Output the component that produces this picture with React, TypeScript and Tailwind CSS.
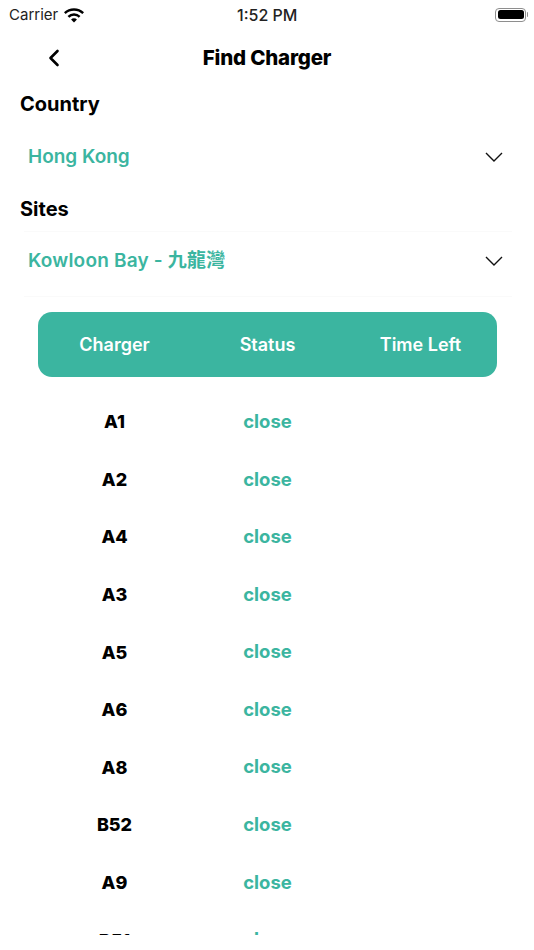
import { ChevronLeft } from "lucide-react";

const chargers = ["A1", "A2", "A4", "A3", "A5", "A6", "A8", "B52", "A9", "B51"];

function WifiIcon() {
  return (
    <svg width="20" height="15" viewBox="1.5 1 17 12.500" fill="#000">
      <path d="M10 3.2c2.7 0 5.2 1 7.1 2.8l1.4-1.5A12.4 12.4 0 0 0 10 1 12.4 12.4 0 0 0 1.500 4.500L2.900 6A10.300 10.300 0 0 1 10 3.200Z" />
      <path d="M10 7.500c1.500 0 2.900.6 4 1.600l1.500-1.500A8 8 0 0 0 10 5.300a8 8 0 0 0-5.500 2.300L6 9.100a5.800 5.800 0 0 1 4-1.600Z" />
      <path d="M10 9.600c-1 0-1.800.4-2.500 1L10 13.200l2.500-2.600c-.7-.6-1.500-1-2.500-1Z" />
    </svg>
  );
}

function BatteryIcon() {
  return (
    <div className="flex items-center">
      <div className="flex h-[14px] w-[31px] items-center rounded-[4px] border border-[#8e8e8e] p-[1.500px]">
        <div className="h-full w-full rounded-[2.500px] bg-black" />
      </div>
      <div className="ml-px h-[5px] w-[1px] rounded-r bg-[#8e8e8e]" />
    </div>
  );
}

function Chevron() {
  return (
    <svg width="18" height="10" viewBox="0 0 18 10" fill="none" stroke="#111" strokeWidth="1.400">
      <path d="M1 1l8 8 8-8" />
    </svg>
  );
}

export default function App() {
  return (
    <div
      className="h-[950px] w-[534px] overflow-hidden bg-white text-black"
      style={{ fontFamily: 'Inter, "Noto Sans CJK TC", sans-serif' }}
    >
      <div className="relative flex h-[28px] items-center justify-between pl-[9px] pr-[6px] pt-[1px]">
        <div className="flex items-center gap-[6px] pt-[1px] text-[15px] text-[#222]">
          Carrier <WifiIcon />
        </div>
        <span className="absolute left-[237px] text-[16px] font-medium text-[#222]">1:52 PM</span>
        <BatteryIcon />
      </div>

      <div className="relative flex h-[60px] items-center justify-center">
        <ChevronLeft size={28} strokeWidth={2.250} className="absolute left-[40px]" />
        <h1 className="text-[20.500px] font-extrabold tracking-[-0.2px]">Find Charger</h1>
      </div>

      <div className="px-[20px]">
        <div className="flex h-[32px] items-center text-[20px] font-bold">Country</div>
        <div className="flex h-[72px] items-center justify-between pl-[8px] pr-[11px] pt-[1px]">
          <span className="pt-[1px] text-[19px] font-semibold text-[#3bb5a0]">Hong Kong</span>
          <Chevron />
        </div>
        <div className="flex h-[39px] items-center pb-[6px] text-[20px] font-bold">Sites</div>
        <div className="ml-[4px] mr-[2px] flex h-[66px] items-center justify-between border-y border-[#fafafa] pb-[7px] pl-[4px] pr-[9px]">
          <span className="pt-[1px] text-[19px] font-semibold tracking-[0.2px] text-[#3bb5a0]">Kowloon Bay - 九龍灣</span>
          <Chevron />
        </div>
      </div>

      <div className="ml-[38px] mr-[37px] mt-[15px] grid h-[65px] grid-cols-3 items-center rounded-[14px] bg-[#3bb5a0] text-center text-[18px] font-semibold text-white">
        <span>Charger</span>
        <span>Status</span>
        <span>Time Left</span>
      </div>

      <div className="ml-[38px] mr-[37px] mt-[16px] h-[542px] overflow-hidden">
        {chargers.map((name, i) => (
          <div key={i} className="grid h-[57.600px] grid-cols-3 items-center text-center text-[18px]">
            <span className="font-extrabold">{name}</span>
            <span className="text-[18.500px] font-bold text-[#3bb5a0]">close</span>
            <span />
          </div>
        ))}
      </div>
    </div>
  );
}
